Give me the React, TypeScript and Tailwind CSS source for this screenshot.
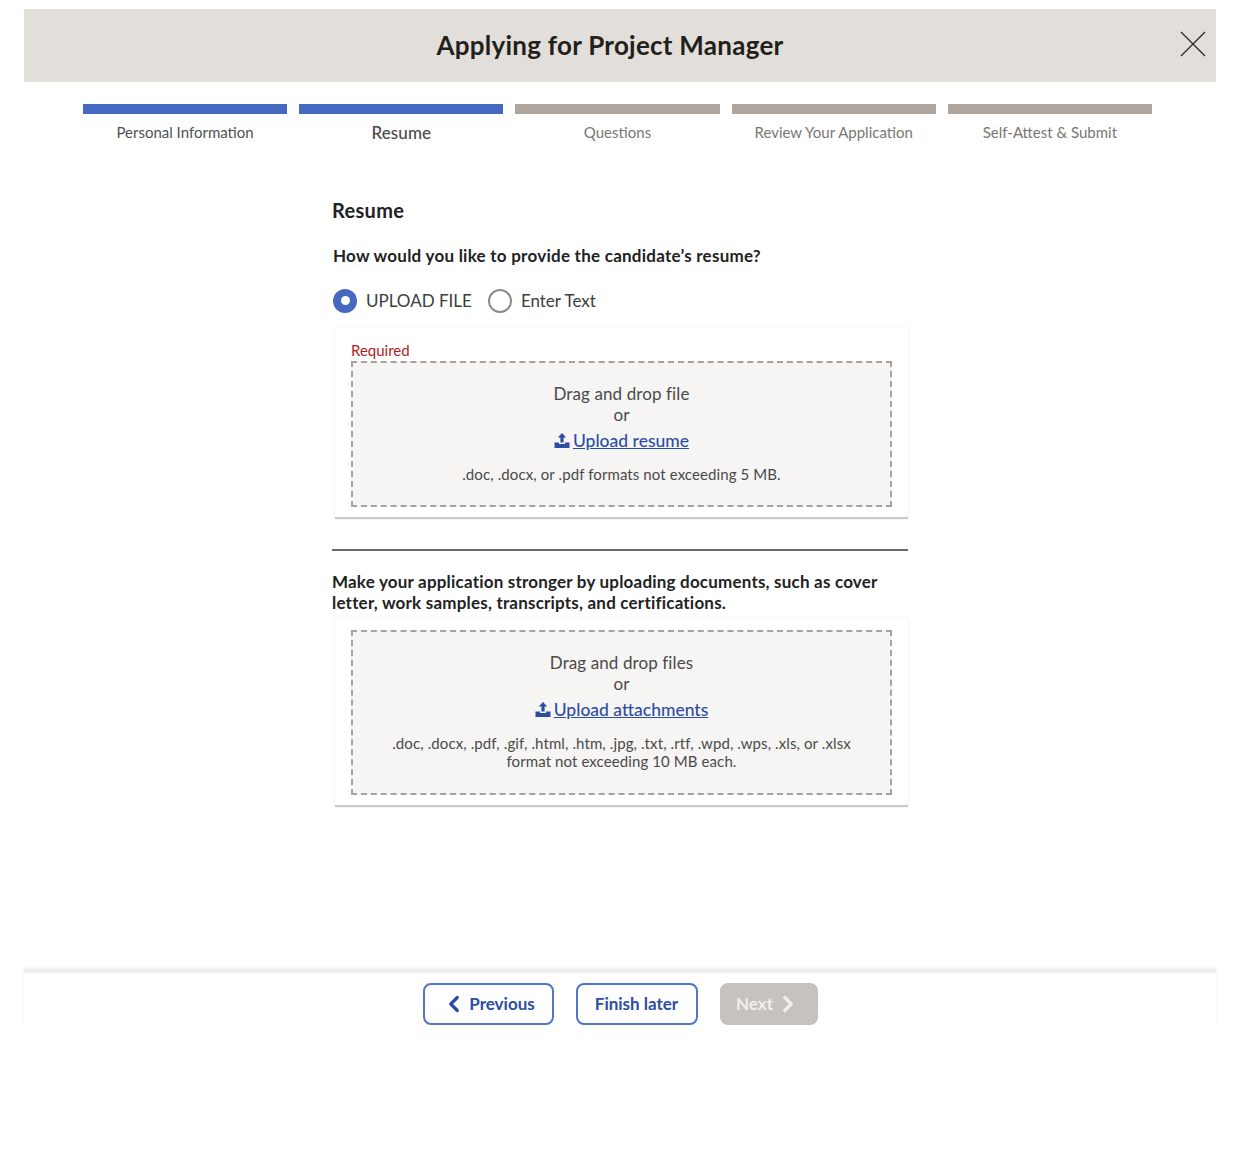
import { ChevronLeft, ChevronRight } from "lucide-react";

const steps = [
  { label: "Personal Information", done: true },
  { label: "Resume", done: true, current: true },
  { label: "Questions" },
  { label: "Review Your Application" },
  { label: "Self-Attest & Submit" },
];

function UploadIcon() {
  return (
    <svg viewBox="0 0 16 16" className="h-[17px] w-[16px] fill-[#2d4da3]">
      <path d="M8 0.5 L12.2 5 H9.6 V10 H6.4 V5 H3.8 Z" />
      <path d="M0.5 10 H5 V11.6 H11 V10 H15.5 V15.5 H0.5 Z" />
    </svg>
  );
}

function DropZone({
  title,
  link,
  hint,
  required,
}: {
  title: string;
  link: string;
  hint: string[];
  required?: boolean;
}) {
  return (
    <div className="ml-[3px] border-b-2 border-[#c9c9c9] px-[16px] pb-[10px] shadow-[0_0_3px_rgba(0,0,0,0.08)]">
      {required ? (
        <p className="pt-[14px] pb-[2px] text-[15px] leading-[19px] text-[#b01e1e]">Required</p>
      ) : (
        <div className="h-[13px]" />
      )}
      <div className="-mt-[1px] flex flex-col items-center border-2 border-dashed border-[#a8a29c] bg-[#f6f5f3] text-center text-[#4a4a4a]">
        <p className="mt-[20px] text-[17px] leading-[21px] tracking-[0.1px]">{title}</p>
        <p className="text-[17px] leading-[21px]">or</p>
        <a className="mt-[4px] flex items-center gap-[3px] text-[17.5px] font-medium leading-[24px] text-[#2d4da3]">
          <UploadIcon />
          <span className="underline">{link}</span>
        </a>
        <div className={required ? "mt-[12px] mb-[22px] text-[15px] leading-[18px] tracking-[0.1px]" : "mt-[12px] mb-[23px] text-[15px] leading-[18px] tracking-[0.1px]"}>
          {hint.map((line) => (
            <p key={line}>{line}</p>
          ))}
        </div>
      </div>
    </div>
  );
}

export default function App() {
  return (
    <div className="h-[1171px] bg-white px-[24px] pt-[9px] font-['Lato','Liberation_Sans',sans-serif] text-[#222]">
      <header className="relative flex h-[73px] items-center justify-center bg-[#e2dfda] pr-[20px]">
        <h1 className="-mt-[1px] text-[26px] font-bold tracking-[0.25px] text-[#231f1c]">Applying for Project Manager</h1>
        <button className="absolute right-[10px] top-[22px]">
          <svg viewBox="0 0 26 26" className="h-[26px] w-[26px] stroke-[#2a2a2a]" fill="none" strokeWidth="1.3">
            <path d="M1 1 L25 25 M25 1 L1 25" />
          </svg>
        </button>
      </header>

      {/* Steps */}
      <div className="mx-[59px] mt-[22px] grid w-[1069px] grid-cols-5 gap-x-[12px]">
        {steps.map((step) => (
          <div key={step.label} className="flex flex-col items-center">
            <div className={step.done ? "h-[10px] w-full bg-[#4569c0]" : "h-[10px] w-full bg-[#aea69f]"} />
            <span
              className={
                step.current
                  ? "mt-[9px] text-[17px] font-medium leading-[20px] tracking-[0.1px] text-[#4a4a4a]"
                  : step.done
                    ? "mt-[8px] text-[15px] leading-[20px] text-[#4f4f4f]"
                    : "mt-[8px] text-[15px] leading-[20px] text-[#7a7672]"
              }
            >
              {step.label}
            </span>
          </div>
        ))}
      </div>

      {/* Form */}
      <main className="ml-[308px] mt-[54px] w-[576px]">
        <h2 className="text-[20px] font-bold leading-[26px] tracking-[0.3px] text-[#222]">Resume</h2>
        <p className="ml-[1px] mt-[21px] text-[17px] font-bold leading-[24px] tracking-[0.25px]">
          How would you like to provide the candidate’s resume?
        </p>
        <div className="ml-[1px] mt-[20px] flex items-center text-[17px] text-[#3d3d3d]">
          <span className="flex h-[24px] w-[24px] items-center justify-center rounded-full bg-[#4569c0]">
            <span className="h-[9px] w-[9px] rounded-full bg-white" />
          </span>
          <span className="ml-[9px]">UPLOAD FILE</span>
          <span className="ml-[16px] h-[24px] w-[24px] rounded-full border-2 border-[#8f8a85] bg-white" />
          <span className="ml-[9px]">Enter Text</span>
        </div>
        <div className="mt-[13px]">
          <DropZone
            required
            title="Drag and drop file"
            link="Upload resume"
            hint={[".doc, .docx, or .pdf formats not exceeding 5 MB."]}
          />
        </div>
        <div className="mt-[30px] h-[2px] bg-[#6f6b60]" />
        <p className="mt-[20px] text-[17px] font-bold leading-[21px] tracking-[0.2px]">
          Make your application stronger by uploading documents, such as cover letter, work samples, transcripts, and
          certifications.
        </p>
        <div className="mt-[5px]">
          <DropZone
            title="Drag and drop files"
            link="Upload attachments"
            hint={[".doc, .docx, .pdf, .gif, .html, .htm, .jpg, .txt, .rtf, .wpd, .wps, .xls, or .xlsx", "format not exceeding 10 MB each."]}
          />
        </div>
      </main>

      {/* Footer */}
      <footer className="mt-[162px] flex h-[60px] items-start justify-center gap-[22px] border-t-[4px] border-[#efefef] pt-[10px] shadow-[0_-2px_3px_rgba(0,0,0,0.05)]">
        <button className="flex h-[42px] w-[131px] items-center justify-center gap-[2px] rounded-[8px] border-2 border-[#4f74c8] text-[17px] font-bold text-[#2d4da3]">
          <ChevronLeft className="h-[26px] w-[26px]" strokeWidth={3} />
          Previous
        </button>
        <button className="h-[42px] w-[122px] rounded-[8px] border-2 border-[#4f74c8] text-[17px] font-bold text-[#2d4da3]">
          Finish later
        </button>
        <button className="flex h-[42px] w-[98px] items-center justify-center gap-[2px] rounded-[8px] bg-[#c8c2be] text-[17px] font-bold text-[#f1efed]">
          Next
          <ChevronRight className="h-[26px] w-[26px]" strokeWidth={3} />
        </button>
      </footer>
    </div>
  );
}
